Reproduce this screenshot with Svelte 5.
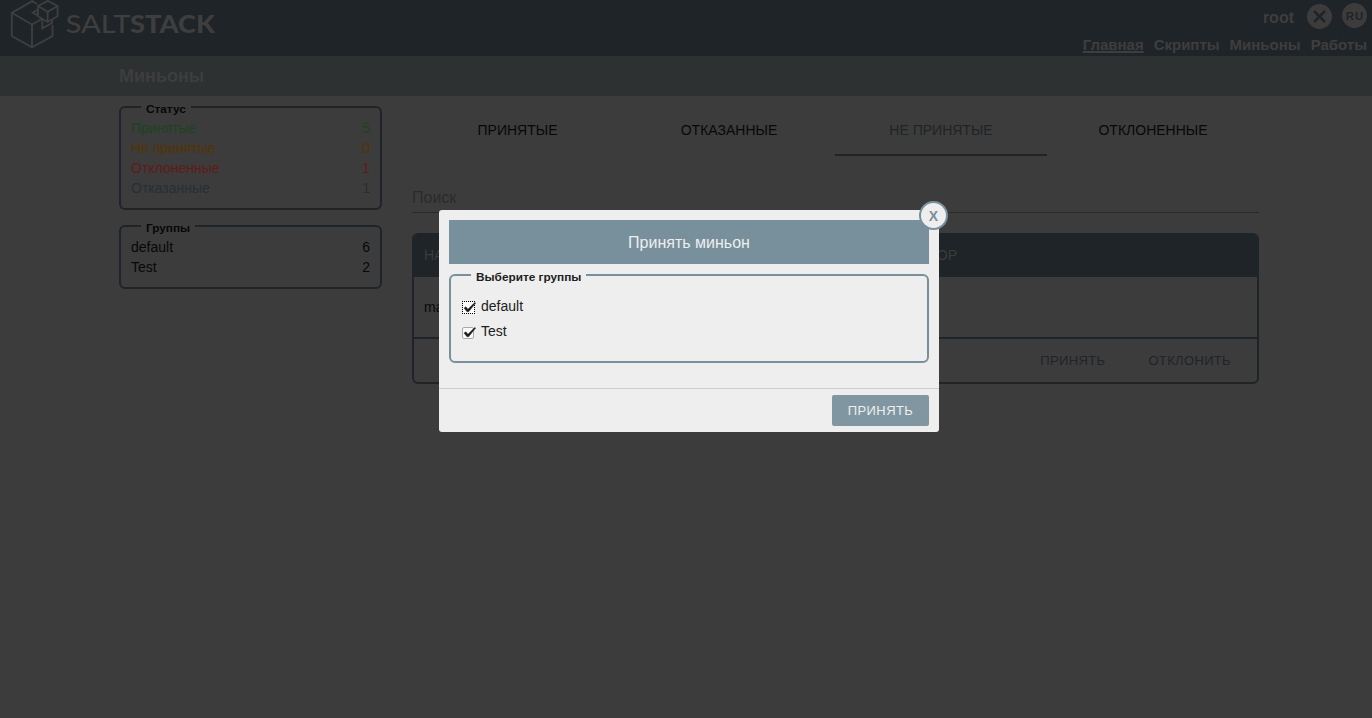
<script>
  const nav = ['Главная', 'Скрипты', 'Миньоны', 'Работы'];
  const statuses = [
    { name: 'Принятые', count: 5, tone: 'green' },
    { name: 'Не принятые', count: 0, tone: 'orange' },
    { name: 'Отклоненные', count: 1, tone: 'red' },
    { name: 'Отказанные', count: 1, tone: 'slate' }
  ];
  const groups = [
    { name: 'default', count: 6 },
    { name: 'Test', count: 2 }
  ];
  const tabs = ['Принятые', 'Отказанные', 'Не принятые', 'Отклоненные'];
</script>

<div class="page">
  <header>
    <div class="logo">
      <svg class="mark" width="50" height="50" viewBox="0 0 50 50" fill="none" stroke="currentColor" stroke-width="1.9">
        <path d="M27 4 22.2 1.2 1.8 12.8V36L22 47.3 42.5 36V25M1.8 12.8 22 24.5 32 18.7M22 24.5V47.3M28 9.3 22.7 12.6 28 15.4M32.3 18.6V28.3L42 23V18.8" />
        <path d="M37.6 .8 28 6V16.3L37.6 22 47.6 16.3V6ZM28 6 37.6 11.8 47.6 6M37.6 11.8V22" />
      </svg>
      <svg class="word" width="152" height="24" viewBox="0 0 152 24">
        <text x="-.5" y="20" textLength="65" lengthAdjust="spacingAndGlyphs">SALT</text>
        <text class="heavy" x="64" y="20" textLength="85" lengthAdjust="spacingAndGlyphs">STACK</text>
      </svg>
    </div>
    <div class="right">
      <div class="user">
        <b>root</b>
        <svg class="exit" width="25" height="25" viewBox="0 0 25 25"><circle cx="12.5" cy="12.5" r="12.5" fill="#3c3c3c" /><path d="M7 7 18 18M18 7 7 18" stroke="#1e2427" stroke-width="2.5" /></svg>
        <span class="lang">RU</span>
      </div>
      <nav>
        {#each nav as item, i}<a class:current={i === 0}>{item}</a>{/each}
      </nav>
    </div>
  </header>
  <div class="title">Миньоны</div>

  <div class="content">
    <aside>
      <fieldset>
        <legend>Статус</legend>
        {#each statuses as s}<div class="row {s.tone}"><span>{s.name}</span><span>{s.count}</span></div>{/each}
      </fieldset>
      <fieldset>
        <legend>Группы</legend>
        {#each groups as g}<div class="row"><span>{g.name}</span><span>{g.count}</span></div>{/each}
      </fieldset>
    </aside>
    <main>
      <div class="tabs">
        {#each tabs as t, i}<div class="tab" class:active={i === 2}>{t}</div>{/each}
      </div>
      <div class="search">Поиск</div>
      <div class="table">
        <div class="thead"><span>НА</span><span>ОР</span></div>
        <div class="trow">ma</div>
        <div class="actions"><span>Принять</span><span>Отклонить</span></div>
      </div>
    </main>
  </div>
</div>

<div class="overlay">
  <div class="modal">
    <div class="close">X</div>
    <div class="body">
      <h2>Принять миньон</h2>
      <fieldset>
        <legend>Выберите группы</legend>
        {#each groups as g, i}
          <div class="check">
            <svg width="15" height="15" viewBox="0 0 15 15">
              {#if i === 0}
                <rect x="1" y="1" width="12" height="12" fill="#fafafa" />
                <path d="M0 .5H13M0 12.5H13M.5 0V13M12.5 0V13" stroke="#000" stroke-dasharray="1 1" />
              {:else}
                <rect x=".5" y="1.5" width="11" height="11" rx="1.5" fill="#fafafa" stroke="#aaa" />
              {/if}
              <path d="M2 7 4 5.8 5.9 8.3 12.7 1.5 13.7 2.1 6.6 10.8H5Z" fill="#1b1b1b" stroke="#1b1b1b" stroke-width=".4" />
            </svg>
            <span>{g.name}</span>
          </div>
        {/each}
      </fieldset>
    </div>
    <footer><button>Принять</button></footer>
  </div>
</div>

<style>
  :global(body) { margin: 0; background: #3c3c3c; overflow: hidden; }
  .page, .overlay { font: 14px/20px "Liberation Sans", Arial, sans-serif; box-sizing: border-box; }
  .page { --line: #1e2427; height: 718px; background: #3c3c3c; color: #080808; }
  header { height: 56px; background: #1e2427; display: flex; justify-content: space-between; color: #3e3e3e; }
  .logo { display: flex; padding-left: 10px; }
  .mark { display: block; }
  .word { margin: 13px 0 0 6px; overflow: visible; }
  .word text { font: 500 25px Lato, sans-serif; fill: #3e3e3e; }
  .word .heavy { font-weight: 900; }
  .right { display: flex; flex-direction: column; align-items: flex-end; padding-right: 5px; }
  .user { display: flex; height: 35px; align-items: flex-start; font-size: 16px; }
  .user b { padding-top: 8px; }
  .exit { margin: 4px 10px 0 13px; }
  .lang { width: 25px; height: 25px; margin-top: 3px; border-radius: 50%; background: #3c3c3c; color: #1e2427; font: bold 11.5px/26px "Liberation Sans", sans-serif; letter-spacing: 1px; text-indent: 1px; text-align: center; }
  nav { display: flex; gap: 10px; font-weight: bold; font-size: 15px; }
  .current { text-decoration: underline; text-decoration-thickness: 2px; }
  .title { height: 40px; background: #2d3131; color: #3e3e3e; font: bold 18px/40px "Liberation Sans", sans-serif; padding-left: 119px; }
  .content { display: flex; gap: 30px; padding: 5px 113px 0 119px; }
  aside { width: 263px; }
  fieldset { margin: 0; border: 2px solid var(--line); border-radius: 6px; padding: 5px 10px 0; min-width: 0; box-sizing: border-box; }
  legend { font: bold 11.8px/8px "Liberation Sans", sans-serif; margin-left: 10px; padding: 4px 5px 0; }
  aside fieldset { height: 109px; }
  aside fieldset + fieldset { margin-top: 10px; height: 69px; }
  .row { display: flex; justify-content: space-between; }
  .green { color: #1b4320; }
  .orange { color: #543300; }
  .red { color: #621a18; }
  .slate { color: #272f33; }
  main { width: 847px; }
  .tabs { display: grid; grid-template-columns: 211px 212px 212px 212px; height: 55px; }
  .tab { box-sizing: border-box; height: 55px; padding-top: 19px; text-align: center; text-transform: uppercase; }
  .active { color: #1e2427; border-bottom: 2px solid var(--line); }
  .search { margin-top: 26px; height: 30px; line-height: 31px; font-size: 16px; color: #2b2b2b; border-bottom: 1px solid #2a2a2a; }
  .table { margin-top: 20px; border: 2px solid var(--line); border-radius: 6px; height: 151px; box-sizing: border-box; overflow: hidden; }
  .thead { height: 42px; line-height: 40px; padding: 0 300px 0 10px; background: #1e2427; color: #3c3c3c; display: flex; justify-content: space-between; }
  .trow { height: 60px; line-height: 60px; padding-left: 10px; border-bottom: 2px solid var(--line); }
  .actions { display: flex; justify-content: flex-end; gap: 43px; padding-right: 26px; line-height: 43px; font-size: 13px; letter-spacing: .35px; color: #1e2427; text-transform: uppercase; }
  .overlay { position: absolute; inset: 0 0 auto; height: 718px; padding-top: 210px; color: #212121; }
  .modal { --line: #78909c; position: relative; width: 500px; height: 222px; margin-left: 439px; background: #eee; border-radius: 3px; }
  .body { height: 178px; padding: 10px 10px 0; box-sizing: border-box; }
  h2 { margin: 0 0 5px; height: 44px; background: #78909c; color: #eee; font: 16px/45px "Liberation Sans", sans-serif; text-align: center; }
  .modal fieldset { height: 94px; padding-top: 12px; }
  .check { display: flex; align-items: center; height: 25px; gap: 4px; padding-left: 1px; }
  .check svg { margin-top: 6px; }
  .close { position: absolute; right: -9px; top: -9px; width: 25px; height: 25px; border: 2px solid #78909c; border-radius: 50%; background: #eee; color: #78909c; font: bold 14px/26px "Liberation Sans", sans-serif; text-align: center; }
  footer { height: 44px; box-sizing: border-box; border-top: 1px solid #ccc; padding: 6px 10px; display: flex; justify-content: flex-end; }
  button { width: 97px; height: 31px; padding: 0; border: 0; border-radius: 2px; background: #8097a2; color: #eee; font: 13px "Liberation Sans", sans-serif; letter-spacing: .4px; text-transform: uppercase; }
</style>
